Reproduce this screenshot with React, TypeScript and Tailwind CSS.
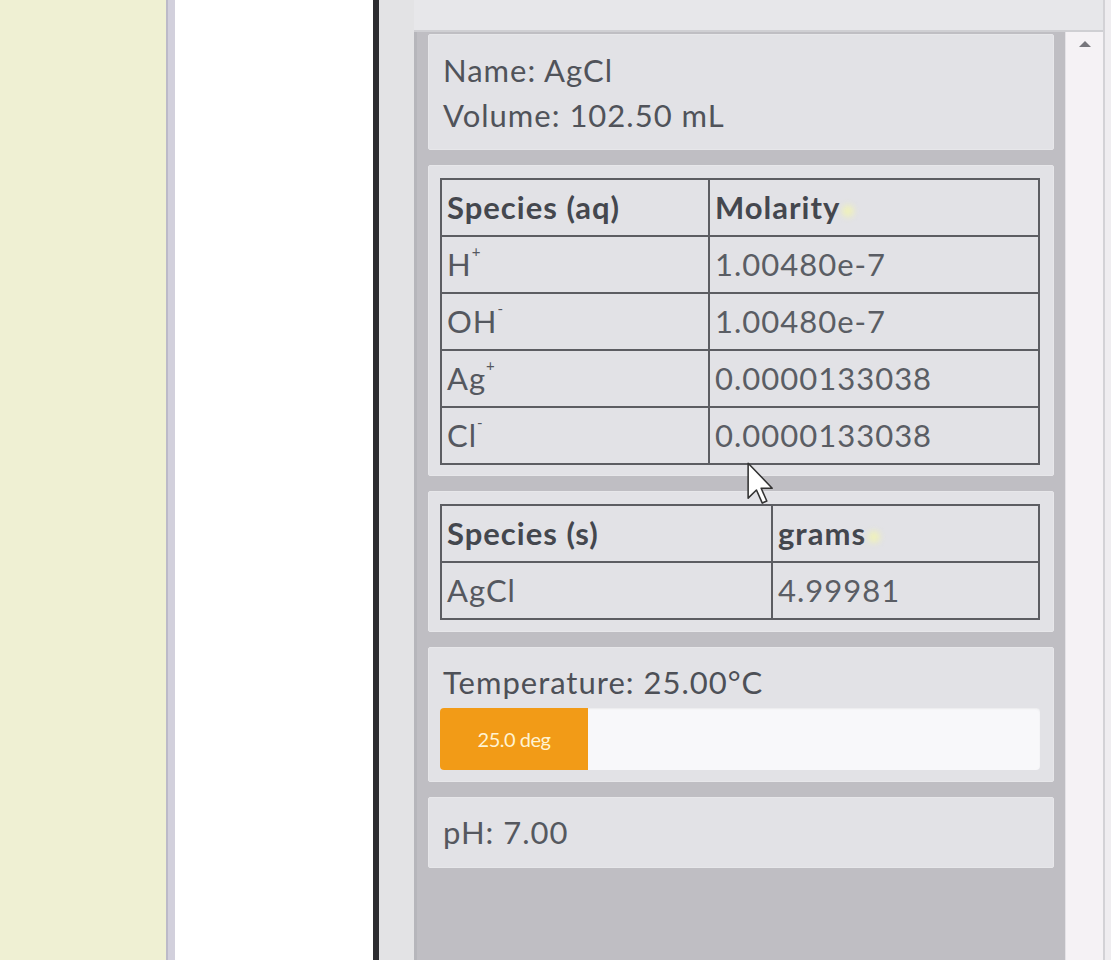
import type { ReactNode } from "react";

type Row = { species: ReactNode; value: string };

const aqueous: Row[] = [
  { species: <>H<sup className="align-super text-[15px] leading-none">+</sup></>, value: "1.00480e-7" },
  { species: <>OH<sup className="align-super text-[15px] leading-none">-</sup></>, value: "1.00480e-7" },
  { species: <>Ag<sup className="align-super text-[15px] leading-none">+</sup></>, value: "0.0000133038" },
  { species: <>Cl<sup className="align-super text-[15px] leading-none">-</sup></>, value: "0.0000133038" },
];

const solids: Row[] = [{ species: "AgCl", value: "4.99981" }];

function Card({ children, className = "" }: { children: ReactNode; className?: string }) {
  return (
    <div className={`rounded-[2px] border border-[#e7e7ea] bg-[#e2e2e6] px-[11px] ${className}`}>
      {children}
    </div>
  );
}

function SortGlow() {
  return <span className="ml-[2px] inline-block h-[12px] w-[12px] rounded-full bg-[#f0f2b8] blur-[3px] align-middle" />;
}

function SpeciesTable({ head, unit, rows, firstCol }: { head: string; unit: string; rows: Row[]; firstCol: string }) {
  const cell = "border-2 border-[#5c5d62] px-[5px] py-[5px] text-left leading-[45px]";
  return (
    <table className="w-[600px] table-fixed border-collapse border-2 border-[#5c5d62]">
      <thead>
        <tr>
          <th className={`${cell} ${firstCol} font-bold text-[#44474e]`}>{head}</th>
          <th className={`${cell} font-bold text-[#44474e]`}>
            {unit}
            <SortGlow />
          </th>
        </tr>
      </thead>
      <tbody>
        {rows.map((r, i) => (
          <tr key={i}>
            <td className={`${cell} font-normal text-[#55585f]`}>{r.species}</td>
            <td className={`${cell} font-normal text-[#5a5d64]`}>{r.value}</td>
          </tr>
        ))}
      </tbody>
    </table>
  );
}

export default function App() {
  return (
    <div className="relative flex h-[960px] w-[1111px] overflow-hidden font-['Lato',sans-serif] text-[31px] tracking-[1px]">
      {/* left page areas */}
      <div className="w-[166px] bg-[#eff0d3]" />
      <div className="w-[9px] border-l-2 border-[#bcbac8] bg-[#d2d0dc]" />
      <div className="w-[198px] bg-white" />
      <div className="w-[6px] bg-[#2c2c30]" />
      <div className="w-[35px] bg-[#e3e3e5]" />

      {/* results panel */}
      <div className="flex flex-1">
        <div className="flex flex-1 flex-col">
          <div className="h-[32px] border-b-2 border-[#cfcfd3] bg-[#e7e7ea]" />
          <div className="flex flex-1">
            <div className="flex w-[651px] flex-col gap-[15px] border-l-[3px] border-[#b6b6bb] bg-[#bfbec3] px-[11px] pt-[2px]">
              <Card className="pt-[13px] pb-[11px]">
                <div className="pl-[3px] leading-[45px] text-[#50535a]">
                  <div>Name: AgCl</div>
                  <div>Volume: 102.50 mL</div>
                </div>
              </Card>

              <Card className="pt-[12px] pb-[10px]">
                <SpeciesTable head="Species (aq)" unit="Molarity" rows={aqueous} firstCol="w-[268px]" />
              </Card>

              <Card className="pt-[12px] pb-[11px]">
                <SpeciesTable head="Species (s)" unit="grams" rows={solids} firstCol="w-[331px]" />
              </Card>

              <Card className="pt-[12px] pb-[11px]">
                <div className="pl-[3px] leading-[45px] text-[#4d5057]">Temperature: 25.00°C</div>
                <div className="mt-[3px] flex h-[62px] w-[600px] overflow-hidden rounded-[4px] bg-[#f8f8fa] shadow-[inset_0_1px_2px_rgba(0,0,0,0.06)]">
                  <div className="flex w-[148px] items-center justify-center bg-[#f29b17] text-[20px] tracking-[-0.5px] text-[#fff3d2]">
                    25.0 deg
                  </div>
                </div>
              </Card>

              <Card className="py-[12px]">
                <div className="pl-[3px] leading-[45px] text-[#55585f]">pH: 7.00</div>
              </Card>
            </div>

            {/* scrollbar */}
            <div className="flex w-[38px] justify-center border-l border-[#e4e2e6] bg-[#f5f2f5] pt-[9px]">
              <div className="h-0 w-0 border-x-[6px] border-b-[6px] border-x-transparent border-b-[#77767c]" />
            </div>
          </div>
        </div>
        <div className="w-[8px] border-l-2 border-[#d3d2d6] bg-[#efedf0]" />
      </div>

      {/* mouse cursor */}
      <svg className="absolute left-[747px] top-[462px]" width="27" height="43" viewBox="0 0 12 19">
        <path d="M0.5 0.5 L0.5 16 L4.2 12.4 L6.8 18.2 L8.8 17.3 L6.3 11.6 L11.2 11.6 Z" fill="#fff" stroke="#333" strokeWidth="0.7" strokeLinejoin="round" />
      </svg>
    </div>
  );
}
